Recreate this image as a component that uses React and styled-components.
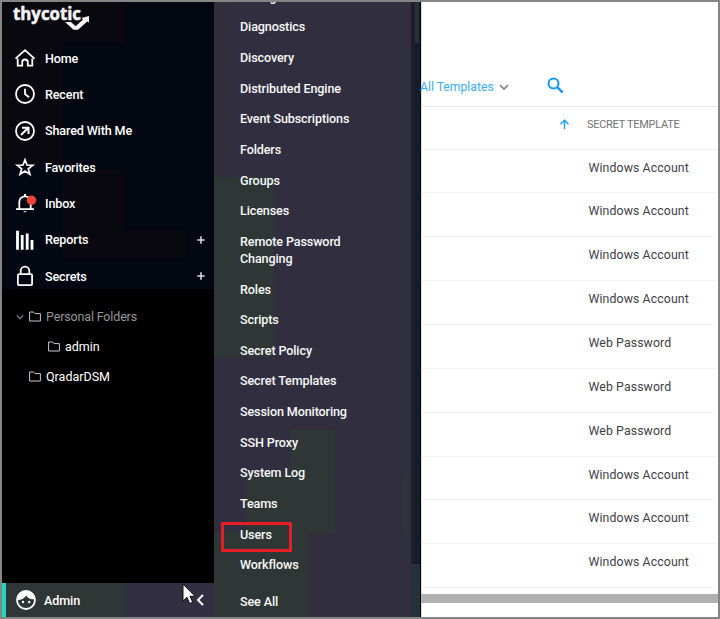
import React from "react";
import styled, { createGlobalStyle } from "styled-components";

const GlobalStyle = createGlobalStyle`
  * { box-sizing: border-box; }
  body { margin: 0; font-family: Roboto, "Liberation Sans", sans-serif; overflow: hidden; }
  svg { display: block; flex: none; overflow: visible; }
`;

const Frame = styled.div`
  position: relative;
  display: grid;
  grid-template-columns: 212px 197px 10px 1fr;
  width: 720px;
  height: 619px;
  border: 2px solid #858585;
  overflow: hidden;
  background: #fff;
`;

const Sidebar = styled.aside`
  display: flex;
  flex-direction: column;
  height: 615px;
  background: #000;
  color: #fff;
`;

const Nav = styled.nav`
  height: 287px;
  background:
    linear-gradient(#09080f, #09080f) 0 0 / 122px 41px no-repeat,
    linear-gradient(#09080f, #09080f) 0 41px / 61px 122px no-repeat,
    linear-gradient(#09080f, #09080f) 61px 168px / 61px 87px no-repeat,
    linear-gradient(#09080f, #09080f) 122px 229px / 62px 26px no-repeat,
    #020711;
`;

const Logo = styled.div`
  height: 38px;
  padding: 1px 0 0 9px;
`;

const LogoText = styled.text`
  font-family: "Open Sans", sans-serif;
  font-weight: 700;
  font-size: 17px;
  fill: #f3f3f5;
  stroke: #f3f3f5;
  stroke-width: 0.5px;
`;

const NavItem = styled.div`
  display: grid;
  grid-template-columns: 30px 1fr 12px;
  align-items: center;
  height: 36.33px;
  padding: 0 6px 0 13px;
  font-size: 12.6px;
  font-weight: 500;
  letter-spacing: -0.15px;
`;

const Tree = styled.div`
  flex: 1;
  padding-top: 13px;
`;

const Folder = styled.div`
  display: flex;
  align-items: center;
  height: 29.7px;
  padding-left: ${(p) => p.$indent}px;
  font-size: 12.5px;
  letter-spacing: ${(p) => p.$track || 0}px;
  color: ${(p) => (p.$dim ? "#97969b" : "#fff")};

  svg + span, svg + svg { margin-left: 5px; }
`;

const UserBar = styled.div`
  display: grid;
  grid-template-columns: 28px 1fr 12px;
  align-items: center;
  height: 34px;
  padding: 0 6px 0 10px;
  border-left: 4px solid #1fd7c2;
  font-size: 12.6px;
  font-weight: 500;
  letter-spacing: -0.1px;
  background: linear-gradient(90deg, #2e3636 118px, #312f41 118px);
`;

const Submenu = styled.div`
  height: 615px;
  overflow: hidden;
  background:
    linear-gradient(#2e3736, #2e3736) 0 175px / 60px 180px no-repeat,
    linear-gradient(#2e3736, #2e3736) 77px 428px / 44px 103px no-repeat,
    linear-gradient(#2e3736, #2e3736) 32px 473px / 50px 60px no-repeat,
    linear-gradient(#2e3736, #2e3736) 0 530px / 94px 85px no-repeat,
    linear-gradient(#2e3736, #2e3736) 189px 472px / 5px 60px no-repeat,
    linear-gradient(#302e38, #302e38) 0 0 / 14px 175px no-repeat,
    #312f3f;
`;

const MenuList = styled.div`
  margin-top: -20.8px;
`;

const MenuItem = styled.div`
  padding: 6.66px 0 6.66px 26px;
  width: 150px;
  font-size: 12.6px;
  font-weight: 500;
  line-height: 17.3px;
  letter-spacing: -0.13px;
  color: #f7f7f8;
  white-space: pre-line;
  margin-top: ${(p) => (p.$last ? "6.5px" : 0)};
`;

const Highlight = styled.div`
  position: absolute;
  left: 219px;
  top: 520px;
  width: 71px;
  height: 30px;
  border: 3px solid #e61c26;
  border-radius: 1px;
`;

const Rail = styled.div`
  height: 615px;
  border-right: 1px solid #000b17;
  background:
    linear-gradient(#26323a, #26323a) 4px 0 / 4px 41px no-repeat,
    linear-gradient(#263039, #263039) 0 562px / 10px 53px no-repeat,
    linear-gradient(90deg, #1e1e26 4px, #131d27 4px);
`;

const Content = styled.main`
  height: 615px;
  border-left: 1px solid #ddd;
`;

const Toolbar = styled.div`
  display: flex;
  align-items: flex-end;
  height: 105px;
  padding-bottom: 10px;
  border-bottom: 1px solid #e9e9eb;
`;

const TemplateFilter = styled.div`
  display: flex;
  align-items: center;
  height: 18px;
  margin-left: -2px;
  font-size: 12.2px;
  color: #38b0fb;

  svg { margin-left: 5px; }
`;

const SearchButton = styled.div`
  margin: 0 0 2px 38px;
`;

const HeaderRow = styled.div`
  display: flex;
  align-items: center;
  height: 43px;
  padding: 0 0 8px 137px;
  border-bottom: 1px solid #f1f1f3;
  font-size: 11px;
  letter-spacing: -0.28px;
  color: #717276;

  span { margin-left: 17px; white-space: nowrap; }
`;

const Rows = styled.section`
  display: flex;
  flex-direction: column;
`;

const Row = styled.div`
  height: 43.9px;
  padding: 10px 0 0 166.5px;
  border-bottom: 1px solid #f4f4f7;
  font-size: 12.3px;
  line-height: 16px;
  letter-spacing: 0.1px;
  white-space: nowrap;
  color: #3f4047;

  &:first-of-type { height: 43.2px; }
`;

const ScrollBar = styled.div`
  height: 9px;
  margin-top: 6px;
  margin-left: -1px;
  background: #b0b0b0;
`;

const Cursor = styled.svg`
  position: absolute;
  left: 180px;
  top: 581px;
`;

const Icon = ({ children }) => (
  <svg width="20" height="20" viewBox="0 0 20 20" fill="none" stroke="#fff" strokeWidth="2">
    {children}
  </svg>
);

const icons = {
  Home: <path d="M.5 10.6 10 2.2l9.5 8.4M2.700 10.5v7.200h4.500v-3.400a2.800 2.800 0 0 1 5.600 0v3.400h4.500v-7.200" strokeWidth="1.8" />,
  Recent: <><circle cx="10" cy="10" r="9" strokeWidth="1.8" /><path d="M10 4.800V10l4 3.200" strokeWidth="1.8" /></>,
  "Shared With Me": <><circle cx="10" cy="10" r="9" strokeWidth="1.8" /><path d="m6 14 7-7M7 6.700h6.500V13" /></>,
  Favorites: <path d="m10 2.800 2 5.200 5.800.3-4.500 3.500 1.600 5.400-4.900-3.100-4.900 3.100 1.600-5.400L2.200 8.300 8 8Z" strokeWidth="1.7" />,
  Inbox: <><path d="M4.300 16V9a5.700 5.700 0 0 1 11.400 0v7M1 16.200h18" strokeWidth="1.8" /><path d="M8 18.200h4l-2 1.300ZM9 1h2v2H9Z" fill="#fff" stroke="none" /><circle cx="16.5" cy="7.3" r="4.7" fill="#ef443b" stroke="none" /></>,
  Reports: <path d="M2.500 .7v19M7.200 5v14.700M12.200 3.500v16.200M17 10v9.700" strokeWidth="2.8" />,
  Secrets: <><rect x="2.900" y="8.200" width="14.200" height="11" rx="1.2" strokeWidth="1.8" /><path d="M5.700 8V5a4.300 4.300 0 0 1 8.600 0v3" strokeWidth="1.8" /></>,
};

const Plus = () => (
  <svg width="10" height="10" viewBox="0 0 10 10" stroke="#d7d8dc" strokeWidth="1.6">
    <path d="M1.200 5h7.500M5 1.300v7.500" />
  </svg>
);

const FolderIcon = () => (
  <svg width="12" height="11" viewBox="0 0 12 11" fill="none" stroke="#c9c7d2">
    <path d="M.6 1h4l1.400 1.600h5.400V10H.6Z" />
  </svg>
);

const Chevron = ({ size, color }) => (
  <svg width={size} height={size} viewBox="0 0 10 10" fill="none" stroke={color} strokeWidth="1.6">
    <path d="m1 3 4 4 4-4" />
  </svg>
);

const menu = [
  "Configuration", "Diagnostics", "Discovery", "Distributed Engine", "Event Subscriptions",
  "Folders", "Groups", "Licenses", "Remote Password\nChanging", "Roles", "Scripts",
  "Secret Policy", "Secret Templates", "Session Monitoring", "SSH Proxy", "System Log",
  "Teams", "Users", "Workflows",
];

const W = "Windows Account";
const P = "Web Password";
const rows = [W, W, W, W, P, P, P, W, W, W];

export default function App() {
  return (
    <>
      <GlobalStyle />
      <Frame>
        <Sidebar>
          <Nav>
            <Logo>
              <svg width="84" height="32" viewBox="0 0 84 32">
                <LogoText x="2" y="17" textLength="68" lengthAdjust="spacingAndGlyphs">thycotic</LogoText>
                <path d="M54 19h6l4.600 4.300 7.400-6.800-1.500-1.500 7.500-2v6.500l-1.800-1L67 26.800h-4.500Z" fill="#f3f3f5" />
              </svg>
            </Logo>
            {Object.keys(icons).map((name) => (
              <NavItem key={name}>
                <Icon>{icons[name]}</Icon>
                <span>{name}</span>
                {(name === "Reports" || name === "Secrets") && <Plus />}
              </NavItem>
            ))}
          </Nav>
          <Tree>
            <Folder $indent={14} $dim $track={-0.15}>
              <Chevron size={8} color="#85858c" />
              <FolderIcon />
              <span>Personal Folders</span>
            </Folder>
            <Folder $indent={46}><FolderIcon /><span>admin</span></Folder>
            <Folder $indent={27}><FolderIcon /><span>QradarDSM</span></Folder>
          </Tree>
          <UserBar>
            <svg width="20" height="20" viewBox="0 0 20 20">
              <circle cx="10" cy="10" r="9" fill="none" stroke="#fff" strokeWidth="1.8" />
              <path d="M1.500 10C2 3.500 6 1 10 1c5 0 8.500 3 9 8-4 .8-7-.7-9-3.500C8.500 8.500 5 10 1.500 10Z" fill="#fff" />
              <circle cx="7" cy="12" r="1.2" fill="#fff" />
              <circle cx="13.2" cy="12" r="1.2" fill="#fff" />
            </svg>
            <span>Admin</span>
            <svg width="9" height="12" viewBox="0 0 9 12" fill="none" stroke="#fff" strokeWidth="2">
              <path d="M7 1 2 6l5 5" />
            </svg>
          </UserBar>
        </Sidebar>
        <Submenu>
          <MenuList>
            {menu.map((m) => <MenuItem key={m}>{m}</MenuItem>)}
            <MenuItem $last>See All</MenuItem>
          </MenuList>
        </Submenu>
        <Rail />
        <Content>
          <Toolbar>
            <TemplateFilter>
              <span>All Templates</span>
              <Chevron size={10} color="#7c8288" />
            </TemplateFilter>
            <SearchButton>
              <svg width="17" height="17" viewBox="0 0 17 17" fill="none" stroke="#1497f5" strokeWidth="2">
                <circle cx="6.500" cy="6.500" r="5" />
                <path d="m10.200 10.200 5.500 5.500" strokeWidth="2.4" />
              </svg>
            </SearchButton>
          </Toolbar>
          <HeaderRow>
            <svg width="11" height="11" viewBox="0 0 11 11" fill="none" stroke="#1ea0f7" strokeWidth="1.4">
              <path d="M5.500 10V1.500M1.500 5.300l4-4 4 4" />
            </svg>
            <span>SECRET TEMPLATE</span>
          </HeaderRow>
          <Rows>
            {rows.map((r, i) => <Row key={i}>{r}</Row>)}
          </Rows>
          <ScrollBar />
        </Content>
        <Highlight />
        <Cursor width="14" height="22" viewBox="0 0 14 22">
          <path d="M1 1v17l4-3.700 2.700 6.200 3-1.300L8 13.300h5Z" fill="#fff" stroke="#111" />
        </Cursor>
      </Frame>
    </>
  );
}
